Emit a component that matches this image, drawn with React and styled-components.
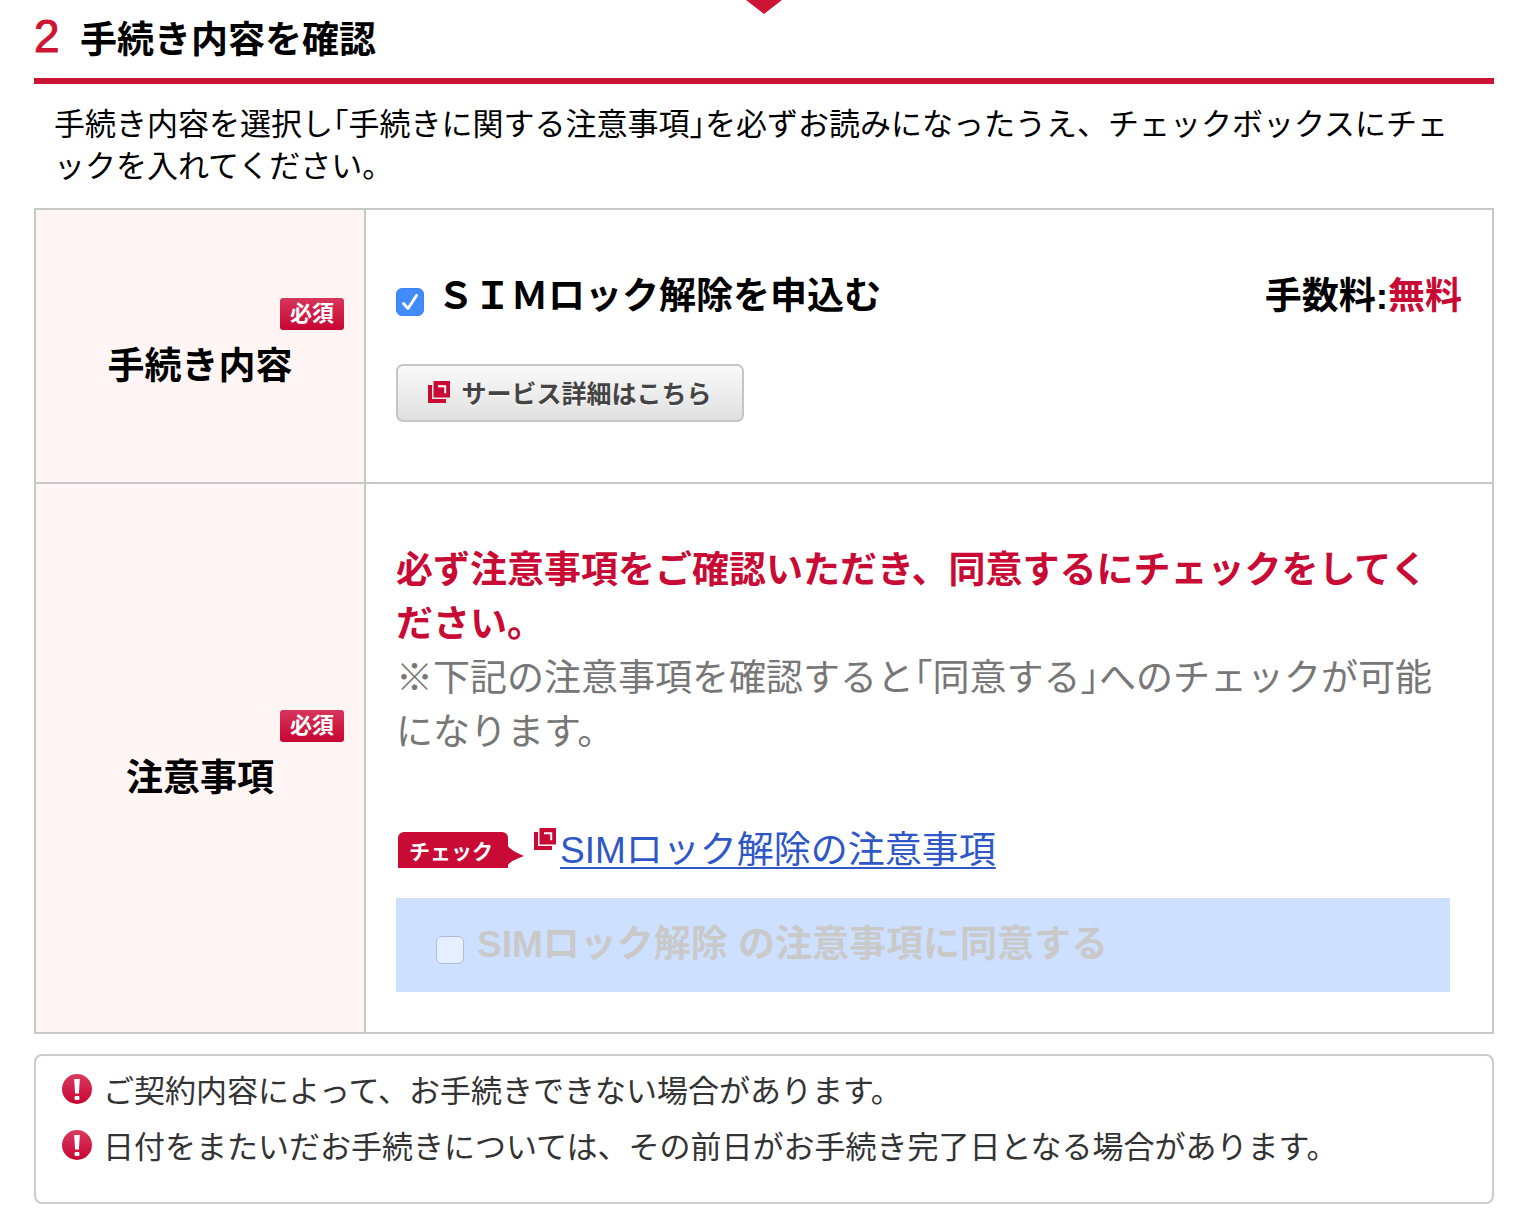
import React, { useState } from 'react';
import styled, { createGlobalStyle } from 'styled-components';

const Crimson = '#cc1433';
const DeepRed = '#c80a35';
const LineGray = '#c8c8c8';

const GlobalStyle = createGlobalStyle`
  * {
    box-sizing: border-box;
  }

  body {
    margin: 0;
    background: #fff;
    color: #000;
    font-family: 'Liberation Sans', 'Noto Sans CJK JP', sans-serif;
  }
`;

const Page = styled.main`
  padding: 0 24px 12px 34px;
`;

const StepArrow = styled.svg`
  display: block;
  width: 36px;
  height: 14px;
  margin: 0 auto;
`;

const StepHeader = styled.header`
  display: flex;
  align-items: flex-start;
  height: 70px;
  border-bottom: 6px solid ${Crimson};
`;

const StepNumber = styled.span`
  width: 46px;
  color: ${Crimson};
  font-size: 46px;
  line-height: 44px;
  -webkit-text-stroke: 1px ${Crimson};
`;

const StepTitle = styled.h2`
  margin: 0;
  font-size: 37px;
  line-height: 54px;
`;

const Intro = styled.p`
  margin: 0;
  padding: 20px;
  font-size: 31px;
  line-height: 42px;
`;

const FormTable = styled.table`
  width: 100%;
  border-collapse: collapse;
  font-size: 37px;
  line-height: 54px;
`;

const HeadCell = styled.th`
  width: 330px;
  padding: 0 20px;
  border: 2px solid ${LineGray};
  background: #fff5f4;
  vertical-align: middle;
`;

const HeadStack = styled.div`
  display: flex;
  flex-direction: column;
  align-items: center;
  gap: 10px;
`;

const Required = styled.span`
  align-self: flex-end;
  width: 64px;
  border-radius: 3px;
  background: linear-gradient(#d6365c, #c80432);
  color: #fff;
  font-size: 22px;
  line-height: 32px;
`;

const BodyCell = styled.td`
  padding: ${({ $notice }) => ($notice ? '60px 42px 40px 30px' : '60px 30px')};
  border: 2px solid ${LineGray};
  vertical-align: top;
`;

const ApplyRow = styled.div`
  display: flex;
  justify-content: space-between;
  margin-bottom: 40px;
  font-weight: bold;
`;

const CheckLabel = styled.label`
  display: flex;
  align-items: flex-start;
  gap: 13px;
  font-weight: bold;
  color: ${({ $disabled }) => ($disabled ? '#c9c9c9' : '#000')};
`;

const CheckInput = styled.input`
  appearance: none;
  flex: none;
  width: 28px;
  height: 28px;
  margin: 18px 0 0;
  border: 1px solid #aebcdc;
  border-radius: 6px;
  background: #e6efff;

  &:checked {
    border-color: #3b82f2;
    background: #428bfa;
  }
`;

const CheckBox = styled.span`
  display: grid;

  > * {
    grid-area: 1 / 1;
  }
`;

const CheckMark = styled.svg`
  width: 28px;
  height: 28px;
  margin-top: 18px;
  pointer-events: none;
`;

const Free = styled.span`
  color: ${DeepRed};
`;

const DetailButton = styled.button`
  display: flex;
  align-items: center;
  justify-content: center;
  gap: 11px;
  width: 348px;
  height: 58px;
  padding: 0 0 2px;
  border: 2px solid #c6c6c6;
  border-radius: 7px;
  background: linear-gradient(#fafafa, #e0e0e0);
  color: #444;
  font-family: inherit;
  font-size: 25px;
  font-weight: bold;
  text-shadow: 0 1px 1px #fff;
`;

const Warning = styled.p`
  margin: 0;
  color: ${DeepRed};
  font-weight: bold;
`;

const Hint = styled.p`
  margin: 0 0 64px;
  color: #777;
`;

const LinkRow = styled.div`
  display: flex;
  align-items: flex-start;
  margin-bottom: 20px;
`;

const CheckTag = styled.span`
  display: flex;
  margin: 8px 10px 0 2px;
`;

const TagBody = styled.span`
  width: 110px;
  padding: 4px 0 0 11px;
  border-radius: 6px 6px 0 0;
  background: ${DeepRed};
  color: #fff;
  font-size: 21px;
  font-weight: bold;
  line-height: 32px;
`;

const TagArrow = styled.svg`
  width: 16px;
  height: 36px;
`;

const WindowSvg = styled.svg`
  flex: none;
  width: 22px;
  height: 22px;
  margin-top: ${({ $raised }) => ($raised ? '4px' : '0')};
`;

const NoticeLink = styled.a`
  margin-left: 4px;
  color: #2f57c8;
  text-decoration-thickness: 2px;
  text-underline-offset: 4px;
  text-decoration-skip-ink: none;
`;

const AgreeBox = styled.div`
  padding: 20px 40px;
  background: #cee0ff;
`;

const NoteList = styled.ul`
  margin: 20px 0 0;
  padding: 8px 26px 26px;
  border: 2px solid #ccc;
  border-radius: 8px;
  color: #333;
  font-size: 31px;
  line-height: 56px;
  list-style: none;
`;

const NoteItem = styled.li`
  display: flex;
  align-items: flex-start;
  gap: 11px;
`;

const AlertSvg = styled.svg`
  flex: none;
  width: 30px;
  height: 30px;
  margin-top: 10px;
`;

const notes = [
  'ご契約内容によって、お手続きできない場合があります。',
  '日付をまたいだお手続きについては、その前日がお手続き完了日となる場合があります。',
];

function WindowIcon({ raised }) {
  return (
    <WindowSvg $raised={raised} viewBox="0 0 22 22" aria-hidden="true">
      <path d="M0 4h4v14h14v4H0z" fill={DeepRed} />
      <path d="M5.5 0H22v16.5H5.5z" fill={DeepRed} />
      <path d="M10 5.2h7.2v7" fill="none" stroke="#fff" strokeWidth="2" />
    </WindowSvg>
  );
}

function AlertIcon() {
  return (
    <AlertSvg viewBox="0 0 30 30" aria-hidden="true">
      <defs>
        <linearGradient id="alertFill" x1="0" y1="0" x2="0" y2="1">
          <stop offset="0" stopColor="#d83a60" />
          <stop offset="1" stopColor="#c80432" />
        </linearGradient>
      </defs>
      <circle cx="15" cy="15" r="15" fill="url(#alertFill)" />
      <path d="M12.2 5h5.6l-.9 14.5h-3.8z" fill="#fff" />
      <rect x="12.6" y="22" width="4.8" height="4" rx="1" fill="#fff" />
    </AlertSvg>
  );
}

function Heading({ children }) {
  return (
    <HeadCell scope="row">
      <HeadStack>
        <Required>必須</Required>
        <span>{children}</span>
      </HeadStack>
    </HeadCell>
  );
}

function App() {
  const [apply, setApply] = useState(true);

  return (
    <Page lang="ja">
      <GlobalStyle />
      <StepArrow viewBox="0 0 36 14" aria-hidden="true">
        <path d="M0 0h36L18 14z" fill={Crimson} />
      </StepArrow>
      <StepHeader>
        <StepNumber>2</StepNumber>
        <StepTitle>手続き内容を確認</StepTitle>
      </StepHeader>
      <Intro>
        手続き内容を選択し｢手続きに関する注意事項｣を必ずお読みになったうえ、チェックボックスにチェックを入れてください。
      </Intro>

      <FormTable>
        <tbody>
          <tr>
            <Heading>手続き内容</Heading>
            <BodyCell>
              <ApplyRow>
                <CheckLabel>
                  <CheckBox>
                    <CheckInput type="checkbox" checked={apply} onChange={() => setApply(!apply)} />
                    {apply && (
                      <CheckMark viewBox="0 0 28 28" aria-hidden="true">
                        <path d="M7.5 15.5l4.5 5L20.5 7.5" fill="none" stroke="#fff" strokeWidth="3" strokeLinecap="round" strokeLinejoin="round" />
                      </CheckMark>
                    )}
                  </CheckBox>
                  ＳＩＭロック解除を申込む
                </CheckLabel>
                <span>手数料:<Free>無料</Free></span>
              </ApplyRow>
              <DetailButton type="button">
                <WindowIcon />
                サービス詳細はこちら
              </DetailButton>
            </BodyCell>
          </tr>
          <tr>
            <Heading>注意事項</Heading>
            <BodyCell $notice>
              <Warning>必ず注意事項をご確認いただき、同意するにチェックをしてください。</Warning>
              <Hint>※下記の注意事項を確認すると｢同意する｣へのチェックが可能になります。</Hint>
              <LinkRow>
                <CheckTag>
                  <TagBody>チェック</TagBody>
                  <TagArrow viewBox="0 0 16 36" aria-hidden="true">
                    <path d="M0 14Q2 18 16 24Q2 29 0 33z" fill={DeepRed} />
                  </TagArrow>
                </CheckTag>
                <WindowIcon raised />
                <NoticeLink href="#notice">SIMロック解除の注意事項</NoticeLink>
              </LinkRow>
              <AgreeBox>
                <CheckLabel $disabled>
                  <CheckInput type="checkbox" disabled />
                  SIMロック解除 の注意事項に同意する
                </CheckLabel>
              </AgreeBox>
            </BodyCell>
          </tr>
        </tbody>
      </FormTable>

      <NoteList>
        {notes.map((note) => (
          <NoteItem key={note}>
            <AlertIcon />
            {note}
          </NoteItem>
        ))}
      </NoteList>
    </Page>
  );
}

export default App;
